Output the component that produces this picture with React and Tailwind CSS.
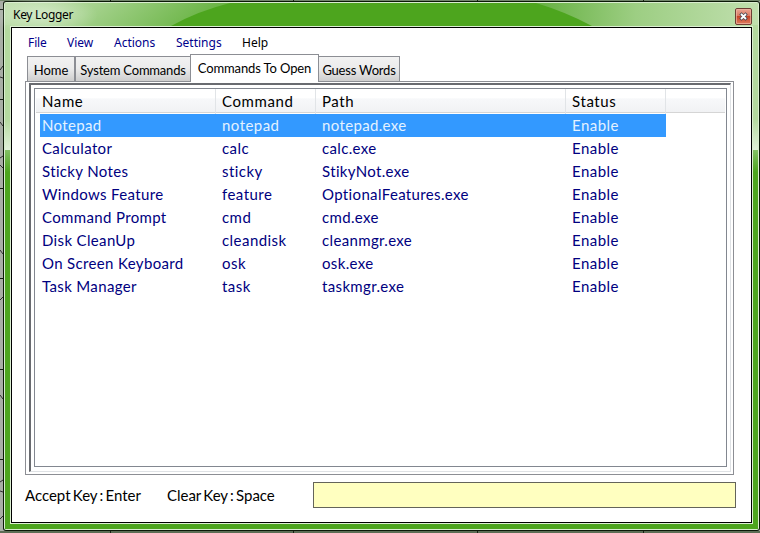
const ROWS = [
  ['Notepad', 'notepad', 'notepad.exe', 'Enable'],
  ['Calculator', 'calc', 'calc.exe', 'Enable'],
  ['Sticky Notes', 'sticky', 'StikyNot.exe', 'Enable'],
  ['Windows Feature', 'feature', 'OptionalFeatures.exe', 'Enable'],
  ['Command Prompt', 'cmd', 'cmd.exe', 'Enable'],
  ['Disk CleanUp', 'cleandisk', 'cleanmgr.exe', 'Enable'],
  ['On Screen Keyboard', 'osk', 'osk.exe', 'Enable'],
  ['Task Manager', 'task', 'taskmgr.exe', 'Enable'],
];

const COLS = 'grid grid-cols-[180px_100px_250px_100px_1fr]';

// Desktop seen around the window's edges, with the glass frame's reflections
function Backdrop() {
  return (
    <svg className="absolute inset-0" width="760" height="533" viewBox="0 0 760 533">
      <defs>
        <linearGradient id="left" x1="0" x2="1" y1="0" y2="0.12">
          <stop offset="0" stopColor="#c0dfae" />
          <stop offset="0.4" stopColor="#a5d28d" />
          <stop offset="1" stopColor="#66b240" />
        </linearGradient>
        <linearGradient id="right" x1="0" x2="1" y1="0" y2="0">
          <stop offset="0" stopColor="#65b041" />
          <stop offset="0.45" stopColor="#9dce83" />
          <stop offset="1" stopColor="#c0dfae" />
        </linearGradient>
        <linearGradient id="side" x1="0" x2="0" y1="0" y2="1">
          <stop offset="0" stopColor="#b4d99f" />
          <stop offset="0.75" stopColor="#b4d99f" />
          <stop offset="1" stopColor="#e0f0d8" />
        </linearGradient>
        <linearGradient id="fade" x1="0" x2="0" y1="0" y2="1">
          <stop offset="0" stopColor="#84c166" />
          <stop offset="1" stopColor="#4da51e" />
        </linearGradient>
        <radialGradient id="glow">
          <stop offset="0" stopColor="#fff" stopOpacity="0.45" />
          <stop offset="1" stopColor="#fff" stopOpacity="0" />
        </radialGradient>
      </defs>
      <rect width="760" height="533" fill="#a8aea5" />
      <rect width="760" height="1" fill="#71866a" />
      <rect y="531" width="760" height="2" fill="#5c6d55" />
      <path d="M0 9.5h3M0 99.5h3M0 188.5h3M0 278.5h3M0 369.5h3M0 459.5h3M110.5 0v1M293.5 0v1M477.5 0v1M643.5 0v1M110.5 531v2M293.5 531v2M477.5 531v2M643.5 531v2" stroke="#172014" />
      <path d="M0 70l3-4M0 77l3 1M0 122l3 4M0 158l3-2M0 165l3 3M0 250l3 4M0 300l3-3M0 395l3 4M0 482l3-2M0 491l3 1M0 519l3-3" stroke="#303030" />
      <rect x="3" y="1" width="757" height="530" rx="3" fill="#0b1907" />
      <rect x="4" y="2" width="755" height="528" rx="2" fill="#d9edcf" />
      <rect x="5" y="3" width="753" height="526" fill="#4da51e" />
      <path d="M5 3H230Q198 11 171 26H5Z" fill="url(#left)" />
      <path d="M536 3H758V26H592Q566 12 536 3Z" fill="url(#right)" />
      <rect x="5" y="25" width="6" height="125" fill="url(#side)" />
      <rect x="752" y="25" width="6" height="125" fill="url(#side)" />
      <rect x="5" y="150" width="6" height="22" fill="url(#fade)" />
      <rect x="752" y="150" width="6" height="22" fill="url(#fade)" />
      <ellipse cx="44" cy="15" rx="54" ry="20" fill="url(#glow)" clipPath="inset(0)" />
      <rect x="10.5" y="26.5" width="742" height="497" fill="none" stroke="#dcefd2" />
    </svg>
  );
}

function CloseButton() {
  return (
    <button className="mt-[7px] h-[17px] w-[17px]" aria-label="Close">
      <svg width="17" height="17" viewBox="0 0 17 17">
        <defs>
          <linearGradient id="red" x1="0" x2="0" y1="0" y2="1">
            <stop offset="0" stopColor="#eba797" />
            <stop offset="0.48" stopColor="#d9775f" />
            <stop offset="0.5" stopColor="#c64328" />
            <stop offset="1" stopColor="#df8062" />
          </linearGradient>
        </defs>
        <rect x="0.5" y="0.5" width="16" height="16" rx="1.5" fill="url(#red)" stroke="#6d3e34" />
        <rect x="1.5" y="1.5" width="14" height="14" rx="0.5" fill="none" stroke="#edb7a5" strokeOpacity="0.7" />
        <path d="M6.5 6.5l4 4M10.5 6.5l-4 4" stroke="#454a56" strokeWidth="3.2" strokeLinecap="square" />
        <path d="M6 6l5 5M11 6l-5 5" stroke="#fff" strokeWidth="1.8" />
      </svg>
    </button>
  );
}

function Tab({ className, children }) {
  return (
    <div className={`flex shrink-0 justify-center whitespace-nowrap border border-[#8c8e94] ${className}`}>
      {children}
    </div>
  );
}

const IDLE = 'h-[26px] bg-linear-to-b from-[#f2f2f2] from-0% via-[#ebebeb] via-48% to-[#cecece] pt-[4px]';

export default function App() {
  return (
    <div className="relative h-[533px] w-[760px] overflow-hidden font-['Noto_Sans','Open_Sans',sans-serif] text-[12px] leading-[18px] text-black">
      <Backdrop />
      <div className="relative flex h-[533px] flex-col pl-[11px] pr-[8px] pt-px">
        <header className="flex h-[26px] shrink-0 justify-between">
          <span className="pl-[2px] pt-[5px] tracking-[-0.3px]">Key Logger</span>
          <CloseButton />
        </header>

        <main className="flex h-[496px] w-[741px] flex-col border border-black bg-white">
          <nav className="grid h-[26px] shrink-0 grid-cols-[39px_47px_62px_66px_60px] pl-[16px] pt-[6px] text-[#00008b]">
            <span className="tracking-[-0.1px]">File</span>
            <span>View</span>
            <span>Actions</span>
            <span>Settings</span>
            <span className="text-black">Help</span>
          </nav>

          <div className="relative z-10 -mb-px flex h-[28px] shrink-0 items-end pl-[15px] font-['Lato','Noto_Sans',sans-serif] text-[13px]">
            <Tab className={`${IDLE} w-[48px]`}>Home</Tab>
            <Tab className={`${IDLE} w-[116px] tracking-[-0.2px]`}>System Commands</Tab>
            <Tab className="-ml-px h-[28px] w-[129px] border-b-0 bg-white pt-[4px] tracking-[-0.12px]">Commands To Open</Tab>
            <Tab className={`${IDLE} -ml-px w-[82px] tracking-[-0.2px]`}>Guess Words</Tab>
          </div>

          <section className="ml-[13px] h-[394px] w-[709px] shrink-0 border border-[#8c8e94] py-px pl-[3px] pr-[2px]">
            <div className="h-[389px] w-[702px] border-b-[1px] border-l-2 border-r border-t-2 border-b-[#dfe2e5] border-l-[#696b70] border-r-[#dfe2e5] border-t-[#696b70] pl-[3px] pt-[3px]">
              <div className="h-[379px] w-[693px] border border-[#828790] px-px font-['Lato','Noto_Sans',sans-serif] text-[15px]">
                <div className={`${COLS} h-[24px] border-b border-[#d5d5d5] bg-linear-to-b from-white from-40% via-[#f7f8fa] via-42% to-[#f1f2f4] leading-[25px]`}>
                  {['Name', 'Command', 'Path', 'Status', ''].map((label, i) => (
                    <span key={i} className={i < 4 ? 'border-r border-[#e1e4e7] pl-[6px] tracking-[0.6px]' : ''}>{label}</span>
                  ))}
                </div>
                <div className="w-[630px] pl-[4px] pt-px">
                  {ROWS.map((row, r) => (
                    <div
                      key={row[0]}
                      className={`grid h-[23px] grid-cols-[180px_100px_250px_96px] pl-[2px] leading-[22px] ${r === 0 ? 'bg-[#3399ff] text-[#e4f2ff]' : 'text-[#000080]'}`}
                    >
                      {row.map((cell, c) => (
                        <span key={c} className={c === 0 || c === 2 ? 'tracking-[0.35px]' : 'tracking-[0.45px]'}>{cell}</span>
                      ))}
                    </div>
                  ))}
                </div>
              </div>
            </div>
          </section>

          <footer className="mt-[7px] flex h-[26px] shrink-0 items-center pl-[13px] font-['Lato','Noto_Sans',sans-serif] text-[15px]">
            <span className="w-[142px] tracking-[-0.02px] [word-spacing:-1.5px]">Accept Key : Enter</span>
            <span className="w-[146px] tracking-[-0.02px] [word-spacing:-1.5px]">Clear Key : Space</span>
            <div className="h-[26px] w-[423px] border border-[#64645a] bg-[#ffffc0]" />
          </footer>
        </main>
      </div>
    </div>
  );
}
